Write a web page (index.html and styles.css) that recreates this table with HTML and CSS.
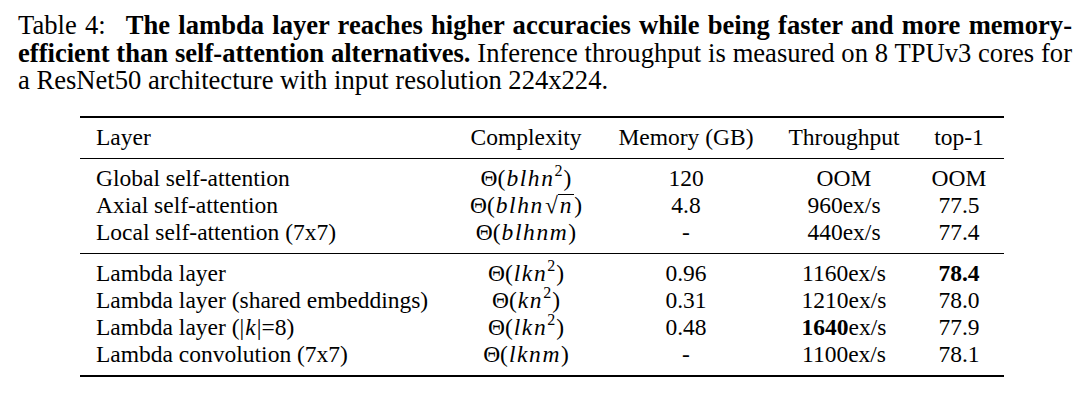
FILE: index.html
```html
<!DOCTYPE html>
<html>
<head>
<meta charset="utf-8">
<link rel="stylesheet" href="styles.css">
</head>
<body>
<p class="caption"><span class="label">Table 4:</span> <b>The lambda layer reaches higher accuracies while being faster and more memory-efficient than self-attention alternatives.</b> Inference throughput is measured on 8 TPUv3 cores for a ResNet50 architecture with input resolution 224x224.</p>
<table class="results">
  <colgroup>
    <col class="c-layer"><col class="c-cx"><col class="c-mem"><col class="c-tp"><col class="c-top"><col class="c-pad">
  </colgroup>
  <thead>
    <tr>
      <th class="name">Layer</th><th>Complexity</th><th>Memory (GB)</th><th>Throughput</th><th>top-1</th><th></th>
    </tr>
  </thead>
  <tbody>
    <tr class="first">
      <td class="name">Global self-attention</td><td><span class="math">Θ(<i>blhn</i><span class="sup">2</span>)</span></td><td>120</td><td>OOM</td><td>OOM</td><td></td>
    </tr>
    <tr>
      <td class="name">Axial self-attention</td><td><span class="math">Θ(<i>blhn</i><span class="sqrt">√</span><span class="rad"><i>n</i></span>)</span></td><td>4.8</td><td>960ex/s</td><td>77.5</td><td></td>
    </tr>
    <tr class="last">
      <td class="name">Local self-attention (7x7)</td><td><span class="math">Θ(<i>blhnm</i>)</span></td><td>-</td><td>440ex/s</td><td>77.4</td><td></td>
    </tr>
  </tbody>
  <tbody>
    <tr class="first">
      <td class="name">Lambda layer</td><td><span class="math">Θ(<i>lkn</i><span class="sup">2</span>)</span></td><td>0.96</td><td>1160ex/s</td><td><b>78.4</b></td><td></td>
    </tr>
    <tr>
      <td class="name">Lambda layer (shared embeddings)</td><td><span class="math">Θ(<i>kn</i><span class="sup">2</span>)</span></td><td>0.31</td><td>1210ex/s</td><td>78.0</td><td></td>
    </tr>
    <tr>
      <td class="name">Lambda layer (|<i class="k">k</i>|=8)</td><td><span class="math">Θ(<i>lkn</i><span class="sup">2</span>)</span></td><td>0.48</td><td><b>1640</b>ex/s</td><td>77.9</td><td></td>
    </tr>
    <tr class="last">
      <td class="name">Lambda convolution (7x7)</td><td><span class="math">Θ(<i>lknm</i>)</span></td><td>-</td><td>1100ex/s</td><td>78.1</td><td></td>
    </tr>
  </tbody>
</table>
</body>
</html>
```
FILE: styles.css
```css
html, body {
  margin: 0;
  padding: 0;
  background: #ffffff;
  color: #000000;
  font-family: "Liberation Serif", "Times New Roman", serif;
}

.caption {
  margin: 12px 0 0 18px;
  width: 1054px;
  font-size: 26.6px;
  line-height: 27.5px;
  text-align: justify;
}

.caption .label {
  margin-right: 12px;
}

.results {
  margin: 21px 0 0 80px;
  border-collapse: collapse;
  table-layout: fixed;
  width: 924px;
  font-size: 23.5px;
  line-height: 27px;
}

.c-layer { width: 360px; }
.c-cx { width: 172px; }
.c-mem { width: 148px; }
.c-tp { width: 168px; }
.c-top { width: 62px; }
.c-pad { width: 14px; }

.results th,
.results td {
  padding: 0;
  text-align: center;
  font-weight: normal;
  white-space: nowrap;
  height: 27px;
}

.results .name {
  text-align: left;
  padding-left: 16px;
}

.results thead tr {
  border-top: 2px solid #000;
}

.results thead th {
  padding-top: 6px;
  padding-bottom: 7px;
}

.results tbody {
  border-top: 1px solid #000;
}

.results tbody:last-child {
  border-bottom: 2px solid #000;
}

.results tr.first td { padding-top: 6px; }
.results tr.last td { padding-bottom: 7px; }

.math {
  font-size: 23.5px;
  line-height: 20px;
}

.math i {
  font-style: italic;
  letter-spacing: 1.6px;
  margin-left: 1px;
}

.k {
  font-style: italic;
  padding: 0 1px;
}

.sup {
  font-size: 16px;
  line-height: 0;
  vertical-align: 10px;
  margin-right: 1px;
}

.sqrt {
  margin-left: 1px;
}

.rad {
  display: inline-block;
  line-height: 20px;
  border-top: 1.5px solid #000;
  padding: 0 1px 0 1px;
}
```
